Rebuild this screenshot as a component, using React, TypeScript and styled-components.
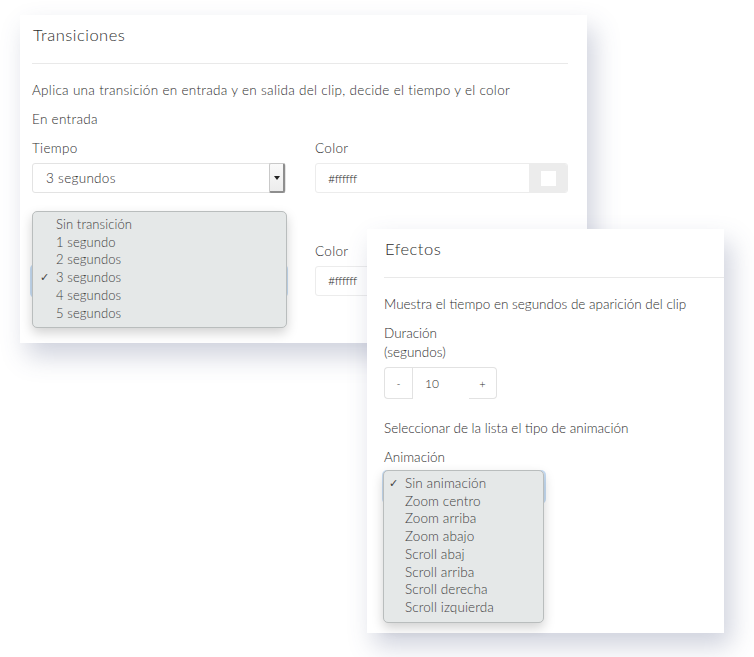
import styled, { createGlobalStyle } from "styled-components";

const GlobalStyle = createGlobalStyle`
  html, body {
    margin: 0;
    padding: 0;
    background: #ffffff;
  }
  body {
    font-family: Lato, "Open Sans", sans-serif;
    color: #353535;
  }
`;

const Canvas = styled.div`
  position: relative;
  width: 754px;
  height: 657px;
  background: #ffffff;
  overflow: hidden;
`;

const Card = styled.section<{ left: number; top: number; w: number; h: number; pl: number; pr: number }>`
  position: absolute;
  left: ${p => p.left}px;
  top: ${p => p.top}px;
  width: ${p => p.w}px;
  height: ${p => p.h}px;
  box-sizing: border-box;
  padding: 0 ${p => p.pr}px 0 ${p => p.pl}px;
  background: #ffffff;
  box-shadow: 7px 13px 24px rgba(70, 80, 125, 0.26);
`;

const Header = styled.header<{ h: number }>`
  height: ${p => p.h}px;
  display: flex;
  align-items: center;
  border-bottom: 1px solid #e9e9e9;
  box-sizing: border-box;
  padding-bottom: 8px;
`;

const Title = styled.h2`
  margin: 0 0 0 1px;
  font-size: 16.5px;
  letter-spacing: 0.5px;
  font-weight: 300;
  color: #2e2e2e;
`;

const Body = styled.div<{ spacing: number }>`
  position: relative;
  font-size: 13.5px;
  font-weight: 300;
  color: #2e2e2e;
  letter-spacing: ${p => p.spacing}px;
  padding-top: 12px;
`;

const Line = styled.p<{ lh?: number; mt?: number; covered?: boolean }>`
  margin: ${p => p.mt ?? 0}px 0 0 0;
  line-height: ${p => p.lh ?? 29}px;
  visibility: ${p => (p.covered ? "hidden" : "visible")};
`;

const Row = styled.div`
  display: grid;
  grid-template-columns: 254px 1fr;
  column-gap: 29px;
`;

const Field = styled.div`
  display: flex;
  flex-direction: column;
`;

const Label = styled.label<{ covered?: boolean }>`
  line-height: 18px;
  margin-bottom: 6px;
  margin-top: 5px;
  visibility: ${p => (p.covered ? "hidden" : "visible")};
`;

const SelectBox = styled.div<{ focused?: boolean; w?: number }>`
  position: relative;
  height: 30px;
  ${p => (p.w ? `width: ${p.w}px;` : "")}
  box-sizing: border-box;
  border: 1px solid #e3e3e3;
  border-radius: 3px;
  display: flex;
  align-items: center;
  padding-left: 13px;
  box-shadow: ${p => (p.focused ? "0 0 0 2px rgba(130, 180, 230, 0.45)" : "none")};
`;

const ArrowButton = styled.span`
  position: absolute;
  right: 0;
  top: -1px;
  width: 16px;
  height: 30px;
  box-sizing: border-box;
  background: linear-gradient(#fafafa, #ececec);
  border: 1px solid #c9c9c9;
  border-right: 2px solid #8e8e8e;
  border-bottom: 2px solid #8e8e8e;
  border-radius: 2px;
  display: flex;
  align-items: center;
  justify-content: center;
  &::after {
    content: "";
    border-left: 3px solid transparent;
    border-right: 3px solid transparent;
    border-top: 4px solid #222;
  }
`;

const ColorInput = styled.div`
  height: 30px;
  box-sizing: border-box;
  border: 1px solid #ececec;
  border-radius: 3px;
  display: flex;
  align-items: stretch;
  overflow: hidden;
`;

const ColorText = styled.span`
  flex: 1;
  display: flex;
  align-items: center;
  padding-left: 12px;
  font-size: 12.5px;
  letter-spacing: -0.6px;
`;

const Swatch = styled.span`
  width: 38px;
  background: #ececec;
  display: flex;
  align-items: center;
  justify-content: center;
  &::after {
    content: "";
    width: 15px;
    height: 15px;
    background: #ffffff;
  }
`;

const Menu = styled.ul<{ left: number; top: number; w: number; size: number; pad: number }>`
  position: absolute;
  left: ${p => p.left}px;
  top: ${p => p.top}px;
  width: ${p => p.w}px;
  margin: 0;
  padding: 4px 0 5px ${p => p.pad}px;
  box-sizing: border-box;
  list-style: none;
  background: #e5e8e8;
  border: 1px solid #b9bdbd;
  border-radius: 5px;
  box-shadow: 0 5px 12px rgba(0, 0, 0, 0.18);
  font-size: ${p => p.size}px;
  letter-spacing: 0.1px;
  color: #3e3e3e;
  z-index: 3;
`;

const MenuItem = styled.li<{ checked?: boolean }>`
  position: relative;
  line-height: 17.7px;
  &::before {
    content: "${p => (p.checked ? "✓" : "")}";
    position: absolute;
    left: -16px;
    font-family: "DejaVu Sans", sans-serif;
    font-size: 11px;
  }
`;

const Stepper = styled.div`
  display: flex;
  height: 32px;
  width: 113px;
  margin-top: 5px;
  font-size: 12px;
`;

const StepButton = styled.span<{ side: "left" | "right" }>`
  width: 28px;
  box-sizing: border-box;
  display: flex;
  align-items: center;
  justify-content: center;
  border: 1px solid #e2e2e2;
  ${p => (p.side === "left" ? "border-right: none; border-radius: 4px 0 0 4px;" : "border-left: none; border-radius: 0 4px 4px 0;")}
  font-size: 11px;
`;

const StepValue = styled.span`
  flex: 1;
  box-sizing: border-box;
  border-top: 1px solid #e2e2e2;
  border-left: 1px solid #e2e2e2;
  display: flex;
  align-items: center;
  padding-left: 12px;
`;

const transitions = ["Sin transición", "1 segundo", "2 segundos", "3 segundos", "4 segundos", "5 segundos"];
const animations = [
  "Sin animación",
  "Zoom centro",
  "Zoom arriba",
  "Zoom abajo",
  "Scroll abaj",
  "Scroll arriba",
  "Scroll derecha",
  "Scroll izquierda",
];

export default function App() {
  return (
    <>
      <GlobalStyle />
      <Canvas>
        <Card left={20} top={15} w={567} h={328} pl={12} pr={19}>
          <Header h={49}>
            <Title>Transiciones</Title>
          </Header>
          <Body spacing={0.3}>
            <Line>Aplica una transición en entrada y en salida del clip, decide el tiempo y el color</Line>
            <Line>En entrada</Line>
            <Row>
              <Field>
                <Label>Tiempo</Label>
                <SelectBox>
                  3 segundos
                  <ArrowButton />
                </SelectBox>
              </Field>
              <Field>
                <Label>Color</Label>
                <ColorInput>
                  <ColorText>#ffffff</ColorText>
                  <Swatch />
                </ColorInput>
              </Field>
            </Row>
            <Line mt={14.5} covered>En salida</Line>
            <Row>
              <Field>
                <Label covered>Tiempo</Label>
                <SelectBox focused>
                  <ArrowButton />
                </SelectBox>
              </Field>
              <Field>
                <Label>Color</Label>
                <ColorInput>
                  <ColorText>#ffffff</ColorText>
                  <Swatch />
                </ColorInput>
              </Field>
            </Row>
            <Menu left={0} top={147} w={255} size={13} pad={23}>
              {transitions.map(t => (
                <MenuItem key={t} checked={t === "3 segundos"}>
                  {t}
                </MenuItem>
              ))}
            </Menu>
          </Body>
        </Card>

        <Card left={367} top={229} w={357} h={404} pl={17} pr={0}>
          <Header h={49}>
            <Title>Efectos</Title>
          </Header>
          <Body spacing={0}>
            <Line>Muestra el tiempo en segundos de aparición del clip</Line>
            <Line lh={19} mt={5}>Duración</Line>
            <Line lh={19}>(segundos)</Line>
            <Stepper>
              <StepButton side="left">-</StepButton>
              <StepValue>10</StepValue>
              <StepButton side="right">+</StepButton>
            </Stepper>
            <Line mt={14.5}>Seleccionar de la lista el tipo de animación</Line>
            <Line>Animación</Line>
            <SelectBox focused w={160} />
            <Menu left={-1} top={192} w={161} size={13.5} pad={21}>
              {animations.map(a => (
                <MenuItem key={a} checked={a === "Sin animación"}>
                  {a}
                </MenuItem>
              ))}
            </Menu>
          </Body>
        </Card>
      </Canvas>
    </>
  );
}
